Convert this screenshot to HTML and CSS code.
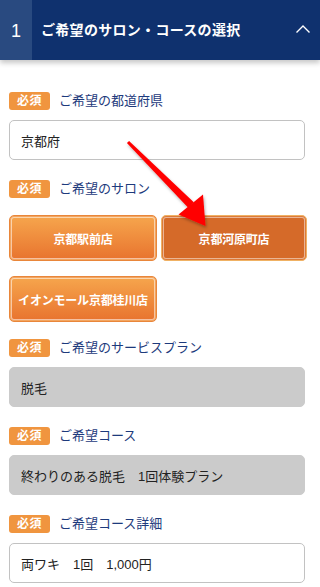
FILE: index.html
```html
<!DOCTYPE html>
<html lang="ja">
<head>
<meta charset="utf-8">
<title>ご希望のサロン・コースの選択</title>
<link rel="stylesheet" href="styles.css">
</head>
<body>
<div class="page">
  <header class="step-head">
    <div class="step-num">1</div>
    <h1 class="step-title">ご希望のサロン・コースの選択</h1>
    <svg class="chev" width="16" height="10" viewBox="0 0 16 10"><path d="M1.5 8.5 L8 2 L14.5 8.5" fill="none" stroke="#fff" stroke-width="1.4"/></svg>
  </header>

  <main class="form">
    <section class="field">
      <div class="label-row"><span class="badge">必須</span><span class="label">ご希望の都道府県</span></div>
      <div class="input">京都府</div>
    </section>

    <section class="field field-salon">
      <div class="label-row"><span class="badge">必須</span><span class="label">ご希望のサロン</span></div>
      <div class="salons">
        <button class="salon">京都駅前店</button>
        <button class="salon selected">京都河原町店</button>
        <button class="salon">イオンモール京都桂川店</button>
      </div>
    </section>

    <section class="field">
      <div class="label-row"><span class="badge">必須</span><span class="label">ご希望のサービスプラン</span></div>
      <div class="input disabled">脱毛</div>
    </section>

    <section class="field">
      <div class="label-row"><span class="badge">必須</span><span class="label">ご希望コース</span></div>
      <div class="input disabled">終わりのある脱毛　1回体験プラン</div>
    </section>

    <section class="field">
      <div class="label-row"><span class="badge">必須</span><span class="label">ご希望コース詳細</span></div>
      <div class="input">両ワキ　1回　1,000円</div>
    </section>
  </main>

  <svg class="arrow" width="320" height="587" viewBox="0 0 320 587">
    <defs>
      <filter id="sh" x="-20%" y="-20%" width="140%" height="140%">
        <feDropShadow dx="1" dy="2" stdDeviation="1.5" flood-color="#000" flood-opacity="0.3"/>
      </filter>
    </defs>
    <g filter="url(#sh)" fill="#ff0000">
      <polygon points="126.9,143.1 129.1,140.9 193.8,202.2 188.2,207.8"/>
      <polygon points="178.5,214.5 203,194.5 205.5,226"/>
    </g>
  </svg>
</div>
</body>
</html>
```

FILE: styles.css
```css
* { box-sizing: border-box; }
html, body { margin: 0; padding: 0; background: #fff; }
body {
  font-family: "Liberation Sans", "Noto Sans CJK JP", sans-serif;
  color: #222;
}
.page { position: relative; width: 320px; min-height: 587px; overflow: hidden; }

.step-head {
  display: flex;
  align-items: center;
  height: 60px;
  background: #0f316e;
  color: #fff;
  box-shadow: 0 3px 5px rgba(0, 0, 0, 0.22);
  position: relative;
  z-index: 1;
}
.step-num {
  width: 32px;
  height: 60px;
  background: #294a80;
  display: flex;
  align-items: center;
  justify-content: center;
  font-size: 18px;
  line-height: 1;
  padding-top: 1px;
}
.step-title {
  margin: 0 0 0 9px;
  font-size: 14px;
  font-weight: bold;
  letter-spacing: 0.3px;
  line-height: 1;
  flex: 1;
}
.chev { margin-right: 9px; margin-top: -2px; }

.form { padding: 32px 13px 0 9px; }
.field { margin-bottom: 20px; }
.field-salon { margin-bottom: 17px; }

.label-row {
  display: flex;
  align-items: center;
  height: 18px;
  margin-bottom: 10px;
}
.badge {
  width: 41px;
  height: 18px;
  border-radius: 3px;
  background: #f0953f;
  color: #fff;
  font-size: 12px;
  font-weight: bold;
  line-height: 18px;
  text-align: center;
  letter-spacing: 0.5px;
}
.label {
  margin-left: 9px;
  font-size: 13px;
  color: #1d3a7c;
  line-height: 18px;
}

.input {
  width: 296px;
  height: 40px;
  border: 1px solid #c2c2c2;
  border-radius: 5px;
  padding: 0 11px;
  display: flex;
  align-items: center;
  font-size: 13px;
  color: #222;
}
.input.disabled { background: #cbcbcb; border-color: #cbcbcb; }

.field-salon .label-row { margin-bottom: 17px; }
.salons {
  display: grid;
  grid-template-columns: 148px 146px;
  column-gap: 4px;
  row-gap: 15px;
}
.salon {
  height: 46px;
  border: 1px solid #e9863a;
  border-radius: 5px;
  background: linear-gradient(#f6a64d, #e8732e);
  box-shadow: inset 0 0 0 1px #f2a560, inset 0 0 0 2px rgba(255, 255, 255, 0.55);
  color: #fff;
  font-family: "Liberation Sans", "Noto Sans CJK JP", sans-serif;
  font-size: 12px;
  font-weight: bold;
  padding: 0;
  letter-spacing: -0.2px;
}
.salon.selected {
  background: #d56a29;
  border-color: #f0b264;
  box-shadow: inset 0 0 0 1px #dc7a3a, inset 0 0 0 2px rgba(255, 255, 255, 0.5);
}

.arrow { position: absolute; left: 0; top: 0; pointer-events: none; z-index: 2; }
```
